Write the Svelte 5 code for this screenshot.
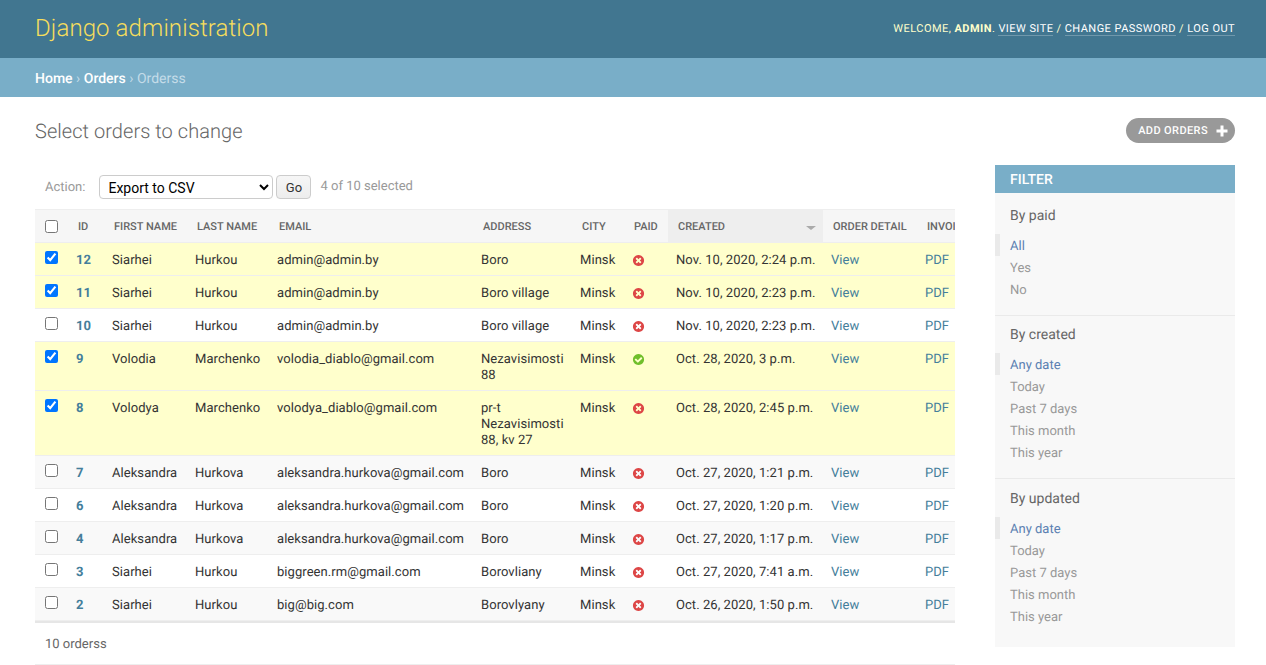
<script>
  const rows = [
    { id: 12, first: "Siarhei", last: "Hurkou", email: "admin@admin.by", address: "Boro", paid: false, created: "Nov. 10, 2020, 2:24 p.m.", on: true, tone: "a" },
    { id: 11, first: "Siarhei", last: "Hurkou", email: "admin@admin.by", address: "Boro village", paid: false, created: "Nov. 10, 2020, 2:23 p.m.", on: true, tone: "b" },
    { id: 10, first: "Siarhei", last: "Hurkou", email: "admin@admin.by", address: "Boro village", paid: false, created: "Nov. 10, 2020, 2:23 p.m.", on: false, tone: "b" },
    { id: 9, first: "Volodia", last: "Marchenko", email: "volodia_diablo@gmail.com", address: "Nezavisimosti 88", paid: true, created: "Oct. 28, 2020, 3 p.m.", on: true, tone: "a" },
    { id: 8, first: "Volodya", last: "Marchenko", email: "volodya_diablo@gmail.com", address: "pr-t Nezavisimosti 88, kv 27", paid: false, created: "Oct. 28, 2020, 2:45 p.m.", on: true, tone: "b" },
    { id: 7, first: "Aleksandra", last: "Hurkova", email: "aleksandra.hurkova@gmail.com", address: "Boro", paid: false, created: "Oct. 27, 2020, 1:21 p.m.", on: false, tone: "a" },
    { id: 6, first: "Aleksandra", last: "Hurkova", email: "aleksandra.hurkova@gmail.com", address: "Boro", paid: false, created: "Oct. 27, 2020, 1:20 p.m.", on: false, tone: "b" },
    { id: 4, first: "Aleksandra", last: "Hurkova", email: "aleksandra.hurkova@gmail.com", address: "Boro", paid: false, created: "Oct. 27, 2020, 1:17 p.m.", on: false, tone: "a" },
    { id: 3, first: "Siarhei", last: "Hurkou", email: "biggreen.rm@gmail.com", address: "Borovliany", paid: false, created: "Oct. 27, 2020, 7:41 a.m.", on: false, tone: "b" },
    { id: 2, first: "Siarhei", last: "Hurkou", email: "big@big.com", address: "Borovlyany", paid: false, created: "Oct. 26, 2020, 1:50 p.m.", on: false, tone: "a" },
  ];

  const dates = ["Any date", "Today", "Past 7 days", "This month", "This year"];
  const filters = [
    { title: "By paid", items: ["All", "Yes", "No"] },
    { title: "By created", items: dates },
    { title: "By updated", items: dates },
  ];

  const widths = [33, 36, 83, 82, 204, 99, 52, 44, 155, 94, 100];
  const heads = ["ID", "First name", "Last name", "Email", "Address", "City", "Paid"];
</script>

<div class="page">
  <header class="top">
    <h1>Django administration</h1>
    <div class="tools">
      Welcome, <strong>admin</strong>.
      <a href="#a">View site</a> / <a href="#a">Change password</a> / <a href="#a">Log out</a>
    </div>
  </header>

  <nav class="crumbs"><a href="#a">Home</a> › <a href="#a">Orders</a> › Orderss</nav>

  <main class="content">
    <div class="title-row">
      <h2>Select orders to change</h2>
      <a class="add" href="#a">
        Add orders
        <svg width="12" height="12" viewBox="0 0 12 12"><path d="M4.5 0.5h3v4h4v3h-4v4h-3v-4h-4v-3h4z" fill="#fff" /></svg>
      </a>
    </div>

    <div class="columns">
      <section class="results">
        <div class="actions">
          <label for="action">Action:</label>
          <select id="action">
            <option>Export to CSV</option>
          </select>
          <button type="button">Go</button>
          <span class="count">4 of 10 selected</span>
        </div>

        <div class="scroller">
          <table>
            <colgroup>
              {#each widths as w}<col style="width: {w}px" />{/each}
            </colgroup>
            <thead>
              <tr>
                <th class="check"><input type="checkbox" /></th>
                {#each heads as h}<th>{h}</th>{/each}
                <th class="sorted">Created<span class="arrow"></span></th>
                <th>Order detail</th>
                <th>Invoice</th>
              </tr>
            </thead>
            <tbody>
              {#each rows as r}
                <tr class:selected={r.on} class={r.tone}>
                  <td class="check"><input type="checkbox" checked={r.on} /></td>
                  <td class="id"><a href="#a">{r.id}</a></td>
                  <td>{r.first}</td>
                  <td>{r.last}</td>
                  <td>{r.email}</td>
                  <td>{r.address}</td>
                  <td>Minsk</td>
                  <td class="paid">
                    {#if r.paid}
                      <svg width="13" height="13" viewBox="0 0 1792 1792"><path fill="#70bf2b" d="M1412 734q0-28-18-46l-91-90q-19-19-45-19t-45 19l-408 407-226-226q-19-19-45-19t-45 19l-91 90q-18 18-18 46 0 27 18 45l362 362q19 19 45 19 27 0 46-19l543-543q18-18 18-45zm252 162q0 209-103 385.5t-279.5 279.5-385.5 103-385.5-103-279.5-279.5-103-385.5 103-385.5 279.5-279.5 385.5-103 385.5 103 279.5 279.5 103 385.5z" /></svg>
                    {:else}
                      <svg width="13" height="13" viewBox="0 0 1792 1792"><path fill="#dd4646" d="M1277 1122q0-26-19-45l-181-181 181-181q19-19 19-45 0-27-19-46l-90-90q-19-19-46-19-26 0-45 19l-181 181-181-181q-19-19-45-19-27 0-46 19l-90 90q-19 19-19 46 0 26 19 45l181 181-181 181q-19 19-19 45 0 27 19 46l90 90q19 19 46 19 26 0 45-19l181-181 181 181q19 19 45 19 27 0 46-19l90-90q19-19 19-46zm387-226q0 209-103 385.5t-279.5 279.5-385.5 103-385.5-103-279.5-279.5-103-385.5 103-385.5 279.5-279.5 385.5-103 385.5 103 279.5 279.5 103 385.5z" /></svg>
                    {/if}
                  </td>
                  <td class="date">{r.created}</td>
                  <td><a href="#a">View</a></td>
                  <td><a href="#a">PDF</a></td>
                </tr>
              {/each}
            </tbody>
          </table>
        </div>
        <p class="paginator">10 orderss</p>
      </section>

      <aside class="filter">
        <h2>Filter</h2>
        {#each filters as f}
          <div class="group">
            <h3>{f.title}</h3>
            <ul>
              {#each f.items as item, i}
                <li class:current={i === 0}><a href="#a">{item}</a></li>
              {/each}
            </ul>
          </div>
        {/each}
      </aside>
    </div>
  </main>
</div>

<style>
  :global(body) {
    margin: 0;
  }

  .page {
    height: 665px;
    overflow: hidden;
    font-family: Roboto, "Liberation Sans", sans-serif;
    font-size: 14px;
    color: #333;
    background: #fff;
    text-rendering: geometricPrecision;
  }

  a {
    color: #447e9b;
    text-decoration: none;
  }

  .top {
    height: 58px;
    box-sizing: border-box;
    padding: 0 31px 2px 35px;
    background: #417690;
    color: #ffc;
    display: flex;
    align-items: center;
    justify-content: space-between;
  }

  h1 {
    margin: 0;
    font-size: 24px;
    font-weight: 300;
    letter-spacing: 0.1px;
    color: #f5dd5d;
  }

  .tools {
    font-size: 11px;
    font-weight: 400;
    letter-spacing: 0.45px;
    text-transform: uppercase;
  }

  .tools strong {
    font-weight: 700;
  }

  .tools a {
    color: #fff;
    border-bottom: 1px solid rgba(255, 255, 255, 0.25);
  }

  .crumbs {
    height: 39px;
    box-sizing: border-box;
    padding: 2px 35px 0;
    line-height: 38px;
    background: #79aec8;
    color: #c4dce8;
  }

  .crumbs a {
    color: #fff;
    font-weight: 500;
  }

  .content {
    padding: 21px 31px 0 35px;
  }

  .title-row {
    display: flex;
    justify-content: space-between;
    align-items: flex-start;
    height: 47px;
  }

  .title-row h2 {
    margin: 0;
    font-size: 20px;
    font-weight: 300;
    letter-spacing: 0.05px;
    line-height: 26px;
    color: #666;
  }

  .add {
    height: 25px;
    box-sizing: border-box;
    padding: 0 7px 0 12px;
    border-radius: 15px;
    background: #999;
    color: #fff;
    font-size: 11px;
    font-weight: 500;
    letter-spacing: 0.4px;
    text-transform: uppercase;
    display: flex;
    align-items: center;
    gap: 8px;
  }

  .columns {
    display: flex;
    justify-content: space-between;
    align-items: flex-start;
  }

  .results {
    width: 920px;
  }

  .actions {
    height: 44px;
    box-sizing: border-box;
    padding: 10px 0 0 10px;
    display: flex;
    align-items: flex-start;
    font-size: 13px;
    color: #999;
  }

  .actions label {
    line-height: 26px;
    margin-right: 14px;
  }

  select {
    width: 174px;
    height: 24px;
    box-sizing: border-box;
    padding: 2px 0 0 4px;
    border: 1px solid #ccc;
    border-radius: 4px;
    background: #fff;
    color: #000;
    font-family: Roboto, sans-serif;
    font-size: 14px;
  }

  button {
    width: 35px;
    height: 24px;
    margin-left: 3px;
    padding: 0;
    border: 1px solid #ccc;
    border-radius: 4px;
    background: linear-gradient(#f6f6f6, #ededed);
    color: #333;
    font-family: Roboto, sans-serif;
    font-size: 13px;
  }

  .count {
    margin-left: 9px;
    line-height: 24px;
  }

  .scroller {
    overflow: hidden;
    border-bottom: 2px solid #e6e6e6;
  }

  table {
    width: 982px;
    table-layout: fixed;
    border-collapse: collapse;
    font-size: 13px;
  }

  th {
    height: 33px;
    box-sizing: border-box;
    padding: 1px 10px 0;
    background: #f6f6f6;
    border-top: 1px solid #eee;
    border-bottom: 1px solid #eee;
    color: #666;
    font-size: 11px;
    font-weight: 500;
    text-align: left;
    text-transform: uppercase;
    white-space: nowrap;
    position: relative;
  }

  th.sorted {
    background: #eee;
  }

  .arrow {
    position: absolute;
    right: 7px;
    top: 16px;
    border-left: 5px solid transparent;
    border-right: 5px solid transparent;
    border-top: 4px solid #aaa;
  }

  td {
    padding: 10px 8px 6px;
    line-height: 16px;
    letter-spacing: 0.06px;
    border-bottom: 1px solid #eee;
    vertical-align: top;
    color: #333;
    overflow: hidden;
  }

  td.date {
    white-space: nowrap;
    overflow: visible;
  }

  tr.a td {
    background: #f9f9f9;
  }

  tr.b td {
    background: #fff;
  }

  tr.selected td {
    background: #ffc;
  }

  .check {
    padding: 0 0 0 10px;
  }

  td.check {
    padding-top: 8px;
  }

  input[type="checkbox"] {
    display: block;
    width: 13px;
    height: 13px;
    margin: 0;
  }

  .id a {
    font-weight: 700;
  }

  .paid svg {
    display: block;
    margin-top: 1px;
  }

  .paginator {
    margin: 0;
    height: 42px;
    box-sizing: border-box;
    padding: 0 10px;
    line-height: 44px;
    font-size: 13px;
    color: #666;
    border-bottom: 1px solid #eee;
  }

  .filter {
    width: 240px;
    background: #f8f8f8;
  }

  .filter h2 {
    margin: 0;
    height: 28px;
    padding: 0 15px;
    line-height: 30px;
    background: #79aec8;
    color: #fff;
    font-size: 14px;
    font-weight: 500;
    text-transform: uppercase;
  }

  .group {
    padding-bottom: 15px;
    border-bottom: 1px solid #eaeaea;
  }

  .group:last-child {
    border-bottom: 0;
    padding-bottom: 20px;
  }

  h3 {
    margin: 0;
    padding: 10px 15px 0;
    font-size: 14px;
    font-weight: 400;
    line-height: 18px;
    color: #666;
  }

  .group:first-of-type h3 {
    padding-top: 14px;
  }

  .group:last-child h3 {
    padding-top: 11px;
  }

  ul {
    list-style: none;
    margin: 9px 0 0;
    padding: 0;
  }

  li {
    height: 22px;
    box-sizing: border-box;
    padding: 2px 0 0 15px;
    line-height: 22px;
    font-size: 13px;
  }

  li a {
    color: #999;
  }

  li.current {
    padding-left: 10px;
    border-left: 5px solid #eaeaea;
  }

  li.current a {
    color: #5b80b2;
  }
</style>
